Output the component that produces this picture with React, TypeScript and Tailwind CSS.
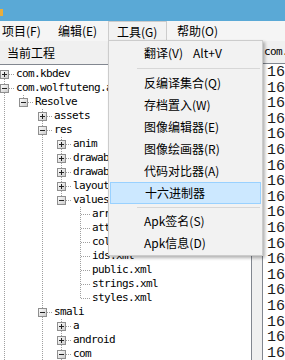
import type { FC } from "react";

type Icon = "plus" | "minus" | "leaf";

interface TreeRow {
  label: string;
  depth: number;
  icon: Icon;
  guides: boolean[];
  last?: boolean;
  first?: boolean;
}

const A = [true, false];
const B = [true, false, true];
const C = [true, false, true, false];

const rows: TreeRow[] = [
  { label: "com.kbdev", depth: 0, icon: "plus", guides: [], first: true },
  { label: "com.wolftuteng.apktool", depth: 0, icon: "minus", guides: [] },
  { label: "Resolve", depth: 1, icon: "minus", guides: [true], last: true },
  { label: "assets", depth: 2, icon: "plus", guides: A },
  { label: "res", depth: 2, icon: "minus", guides: A },
  { label: "anim", depth: 3, icon: "plus", guides: B },
  { label: "drawable", depth: 3, icon: "plus", guides: B },
  { label: "drawable-hdpi", depth: 3, icon: "plus", guides: B },
  { label: "layout", depth: 3, icon: "plus", guides: B },
  { label: "values", depth: 3, icon: "minus", guides: B, last: true },
  { label: "arrays.xml", depth: 4, icon: "leaf", guides: C },
  { label: "attrs.xml", depth: 4, icon: "leaf", guides: C },
  { label: "colors.xml", depth: 4, icon: "leaf", guides: C },
  { label: "ids.xml", depth: 4, icon: "leaf", guides: C },
  { label: "public.xml", depth: 4, icon: "leaf", guides: C },
  { label: "strings.xml", depth: 4, icon: "leaf", guides: C },
  { label: "styles.xml", depth: 4, icon: "leaf", guides: C, last: true },
  { label: "smali", depth: 2, icon: "minus", guides: A },
  { label: "a", depth: 3, icon: "plus", guides: B },
  { label: "android", depth: 3, icon: "plus", guides: B },
  { label: "com", depth: 3, icon: "minus", guides: B },
];

const DOT = "#a0a0a0";

const Guide: FC<{ on: boolean }> = ({ on }) => (
  <svg width="19" height="14" className="shrink-0" shapeRendering="crispEdges">
    {on && <line x1="4.5" y1="0" x2="4.5" y2="14" stroke={DOT} strokeDasharray="1 1" />}
  </svg>
);

const Connector: FC<{ row: TreeRow; id: string }> = ({ row, id }) => (
  <svg width="16" height="14" className="shrink-0" shapeRendering="crispEdges">
    <defs>
      <linearGradient id={id} x1="0" y1="0" x2="1" y2="1">
        <stop offset="0" stopColor="#ffffff" />
        <stop offset="1" stopColor="#c9c9c9" />
      </linearGradient>
    </defs>
    {!row.first && <line x1="4.5" y1="0" x2="4.5" y2="7" stroke={DOT} strokeDasharray="1 1" />}
    {!row.last && <line x1="4.5" y1="8" x2="4.5" y2="14" stroke={DOT} strokeDasharray="1 1" />}
    <line x1="5" y1="7.5" x2="15" y2="7.5" stroke={DOT} strokeDasharray="1 1" />
    {row.icon !== "leaf" && (
      <g>
        <rect x="0.5" y="3.5" width="8" height="8" fill={`url(#${id})`} stroke="#8f8f8f" />
        <line x1="2" y1="7.5" x2="7" y2="7.5" stroke="#222" />
        {row.icon === "plus" && <line x1="4.5" y1="5" x2="4.5" y2="10" stroke="#222" />}
      </g>
    )}
  </svg>
);

const menuItems: ({ label: string; key?: string; active?: boolean } | { sep: number })[] = [
  { label: "翻译(V)", key: "Alt+V" },
  { sep: 8 },
  { label: "反编译集合(Q)" },
  { label: "存档置入(W)" },
  { label: "图像编辑器(E)" },
  { label: "图像绘画器(R)" },
  { label: "代码对比器(A)" },
  { label: "十六进制器", active: true },
  { sep: 6 },
  { label: "Apk签名(S)" },
  { label: "Apk信息(D)" },
];

export default function App() {
  const ui = { fontFamily: '"Noto Sans CJK SC", "Noto Sans", sans-serif' };
  const mono = { fontFamily: '"DejaVu Sans Mono", "Liberation Mono", monospace' };
  const numFont = { fontFamily: '"Liberation Mono", monospace' };

  return (
    <div className="relative w-[285px] h-[360px] overflow-hidden bg-[#f0f0f0] flex flex-col text-black" style={ui}>
      {/* title bar */}
      <div className="h-[21px] shrink-0 bg-[#5aa9d6] flex items-start">
        <div className="w-[3px] h-[7px] mt-[9px] bg-[#e9ad3c]" />
      </div>

      {/* menu bar */}
      <div className="h-[20px] shrink-0 flex items-stretch text-[12px] leading-none bg-[#f5f5f5]">
        <div className="w-[56px] pl-[2px] flex items-center">项目(F)</div>
        <div className="w-[52px] pl-[2px] flex items-center">编辑(E)</div>
        <div className="w-[59px] pl-[8px] flex items-center bg-[#f2f2f2] border border-b-0 border-[#cccccc]">工具(G)</div>
        <div className="pl-[10px] flex items-center">帮助(O)</div>
      </div>

      {/* body */}
      <div className="flex flex-1 min-h-0">
        <div className="w-[252px] shrink-0 flex flex-col">
          <div className="h-[23px] shrink-0 pl-[7px] flex items-center text-[12px] leading-none">当前工程</div>
          <div className="flex-1 bg-white border-t border-r border-[#828790] pt-[2px] overflow-hidden">
            {rows.map((row, i) => (
              <div key={i} className="h-[14px] flex items-center whitespace-nowrap">
                {row.guides.map((on, j) => (
                  <Guide key={j} on={on} />
                ))}
                <Connector row={row} id={`bx${i}`} />
                <span className="text-[11px] leading-[14px] tracking-[-0.62px]" style={mono}>
                  {row.label}
                </span>
              </div>
            ))}
          </div>
        </div>

        <div className="w-[10px] shrink-0" />

        <div className="flex-1 min-w-0 flex flex-col">
          <div className="h-[22px] shrink-0 pl-[2px] flex items-center text-[11px] tracking-[-0.62px] whitespace-nowrap overflow-hidden" style={mono}>
            com.wolftuteng
          </div>
          <div className="flex-1 bg-white border-t border-l border-[#828790] pl-[4px] pt-[1px] overflow-hidden">
            {Array.from({ length: 19 }, (_, i) => (
              <div key={i} className="h-[15.6px] leading-[15.6px] text-[15px] text-[#1a1a1a] whitespace-nowrap overflow-hidden" style={numFont}>
                16
              </div>
            ))}
          </div>
        </div>
      </div>

      {/* open dropdown menu */}
      <div className="absolute left-[108px] top-[40px] w-[155px] bg-[#f2f2f2] border border-[#cccccc] shadow-[2px_2px_3px_rgba(0,0,0,0.3)] py-[1px] text-[12px] leading-none">
        {menuItems.map((m, i) =>
          "sep" in m ? (
            <div key={i} className={`flex items-center pl-[28px] pr-[2px] ${m.sep === 8 ? "h-[8px]" : "h-[6px]"}`}>
              <div className="h-px w-full bg-[#d7d7d7]" />
            </div>
          ) : (
            <div
              key={i}
              className={`h-[22px] mx-[1px] flex items-center pl-[34px] ${
                m.active ? "bg-[#cce8ff] border border-[#99d1ff] pl-[33px]" : ""
              }`}
            >
              <span className="w-[49px] whitespace-nowrap">{m.label}</span>
              {m.key && <span>{m.key}</span>}
            </div>
          )
        )}
      </div>
    </div>
  );
}
